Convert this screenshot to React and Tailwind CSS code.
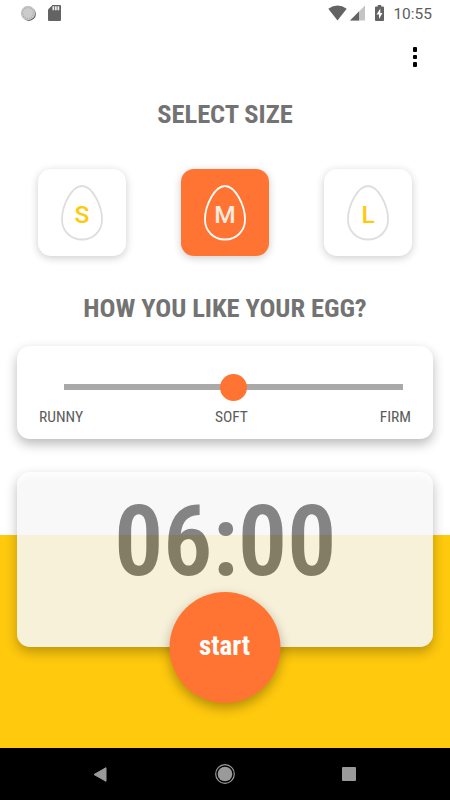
import { useState } from 'react';
import { clsx } from 'clsx';

const sizes = ['S', 'M', 'L'];
const textures = ['RUNNY', 'SOFT', 'FIRM'];

const StatusBar = () => (
  <div className="flex h-[27px] items-center justify-between pl-5 pr-[18px]">
    <div className="flex items-center gap-3">
      <svg className="-mt-px h-4 w-4" viewBox="0 0 16 16">
        <circle cx="8.9" cy="8.9" r="7" fill="#606060" />
        <circle cx="8" cy="8" r="7.2" fill="#c9c9c9" />
        <circle cx="8" cy="8" r="5.6" fill="none" stroke="#aaa" strokeWidth="1.6" strokeDasharray="0.8 1.4" />
        <circle cx="8" cy="8" r="4.6" fill="#cbcbcb" />
      </svg>
      <svg className="-mt-px h-4 w-[13px]" viewBox="0 0 13 16">
        <path d="M4.5 0H12q1 0 1 1v14q0 1-1 1H1q-1 0-1-1V4.5z" fill="#636363" />
        <path d="M4.5 1.3h1.7v4H4.5zM7 1.3h1.7v4H7zM9.5 1.3h1.7v4H9.5z" fill="#eee" />
      </svg>
    </div>
    <div className="flex items-center">
      <svg className="-mt-px h-4 w-[19px]" viewBox="0 0 19 16">
        <path d="M0.3 3.8Q9.5-2.8 18.7 3.8L9.5 15.4z" fill="#636363" />
      </svg>
      <svg className="-mt-px ml-[3px] h-4 w-[15px]" viewBox="0 0 15 16">
        <path d="M15 .5V15.5H0z" fill="#c4c4c4" />
        <path d="M9 6.5V15.5H0z" fill="#636363" />
      </svg>
      <svg className="-mt-px ml-[10px] h-4 w-[9px]" viewBox="0 0 9 16">
        <path d="M2.8 0h3.4v1.5H8q1 0 1 1V15q0 1-1 1H1q-1 0-1-1V2.5q0-1 1-1h1.8z" fill="#636363" />
        <path d="M5.3 3.5L1.5 9.5H4V14l3.5-6H5.3z" fill="#fff" />
      </svg>
      <span className="ml-[9px] pt-[3px] text-[15.5px] leading-none text-[#5c5c5c]">10:55</span>
    </div>
  </div>
);

const SizeTile = ({ label, active, onClick }) => (
  <button
    onClick={onClick}
    className={clsx(
      'flex h-[87px] w-[88px] items-center justify-center rounded-[13px] shadow-[0_2px_8px_rgba(0,0,0,0.2)]',
      active ? 'bg-[#ff7433]' : 'bg-white'
    )}
  >
    <svg className="h-14 w-[42px]" viewBox="0 0 42 56">
      <path
        d="M21 1C31 1 41 20 41 34.5C41 46.5 32 54.5 21 54.5C10 54.5 1 46.5 1 34.5C1 20 11 1 21 1z"
        fill="none"
        stroke={active ? '#fff' : '#dedede'}
        strokeWidth="1.8"
      />
      <text
        x="21"
        y="38"
        textAnchor="middle"
        fontSize="24.5"
        fontWeight="500"
        fill={active ? '#ffeae0' : '#ffc90d'}
      >
        {label}
      </text>
    </svg>
  </button>
);

const NavBar = () => (
  <div className="flex h-[52px] items-center justify-between bg-black pl-[93px] pr-[94px] text-[#9a9a9a]">
    <svg className="h-[15px] w-[14px]" viewBox="0 0 14 15">
      <path d="M13 .7V14.3L1 7.5z" fill="currentColor" stroke="currentColor" strokeLinejoin="round" />
    </svg>
    <svg className="h-5 w-5" viewBox="0 0 20 20">
      <circle cx="10" cy="10" r="9.3" fill="none" stroke="currentColor" strokeWidth="1.2" />
      <circle cx="10" cy="10" r="7.3" fill="currentColor" />
    </svg>
    <div className="h-[14px] w-[14px] rounded-[1px] bg-[#9a9a9a]" />
  </div>
);

export default function App() {
  const [size, setSize] = useState('M');

  return (
    <div className="flex h-[800px] w-[450px] flex-col overflow-hidden bg-white font-[Roboto,sans-serif]">
      <main className="flex h-[748px] flex-col bg-[linear-gradient(#fff_535px,#ffc90d_535px)]">
        <StatusBar />

        <div className="flex h-[60px] items-center justify-end pr-[33px]">
          <button className="flex flex-col gap-[3px]">
            <span className="h-[4.5px] w-[4.5px] rounded-[1px] bg-black" />
            <span className="h-[4.5px] w-[4.5px] rounded-[1px] bg-black" />
            <span className="h-[4.5px] w-[4.5px] rounded-[1px] bg-black" />
          </button>
        </div>

        <h1 className="mt-3 text-center font-['Roboto_Condensed',Roboto,sans-serif] text-[26.5px] font-bold leading-[30px] tracking-[-0.05px] text-[#737373] [font-stretch:75%]">
          SELECT SIZE
        </h1>

        <div className="mt-10 flex justify-between px-[38px]">
          {sizes.map((s) => (
            <SizeTile key={s} label={s} active={s === size} onClick={() => setSize(s)} />
          ))}
        </div>

        <h2 className="mt-[37px] text-center font-['Roboto_Condensed',Roboto,sans-serif] text-[26.5px] font-bold leading-[30px] tracking-[-0.07px] text-[#737373] [font-stretch:75%]">
          HOW YOU LIKE YOUR EGG?
        </h2>

        <section className="mx-[17px] mt-[23px] h-[93px] rounded-[13px] bg-white shadow-[0_5px_12px_rgba(0,0,0,0.28)]">
          <div className="ml-[47px] flex h-[82px] w-[339px] items-center">
            <div className="flex h-[6.5px] w-full items-center justify-center bg-[#a9a9a9]">
              <span className="h-[27px] w-[27px] rounded-full bg-[#ff7433]" />
            </div>
          </div>
          <div className="-mt-5 flex justify-between px-[22px] font-['Roboto_Condensed',Roboto,sans-serif] text-[15.5px] font-[450] leading-[18px] text-[#5c5c5c] [font-stretch:75%]">
            {textures.map((t) => (
              <span key={t}>{t}</span>
            ))}
          </div>
        </section>

        <section className="mx-[17px] mt-[33px] h-[175px] rounded-[13px] bg-[#f7f7f7] text-center opacity-[0.876] shadow-[0_5px_12px_rgba(0,0,0,0.3),inset_0_8px_10px_-4px_#fff]">
          <div className="pt-[20px] font-['Roboto_Condensed',Roboto,sans-serif] text-[98.5px] font-semibold leading-[100px] tracking-[-0.4px] text-[#737373] [font-stretch:75%]">
            06:00
          </div>
        </section>

        <button className="z-10 mx-auto -mt-[55px] h-[111px] w-[111px] shrink-0 -translate-x-[0.5px] rounded-full bg-[#ff7433] pb-0.5 font-['Roboto_Condensed',Roboto,sans-serif] text-[27px] font-bold text-white shadow-[0_5px_12px_rgba(0,0,0,0.3)] [font-stretch:75%]">
          start
        </button>
      </main>
      <NavBar />
    </div>
  );
}
